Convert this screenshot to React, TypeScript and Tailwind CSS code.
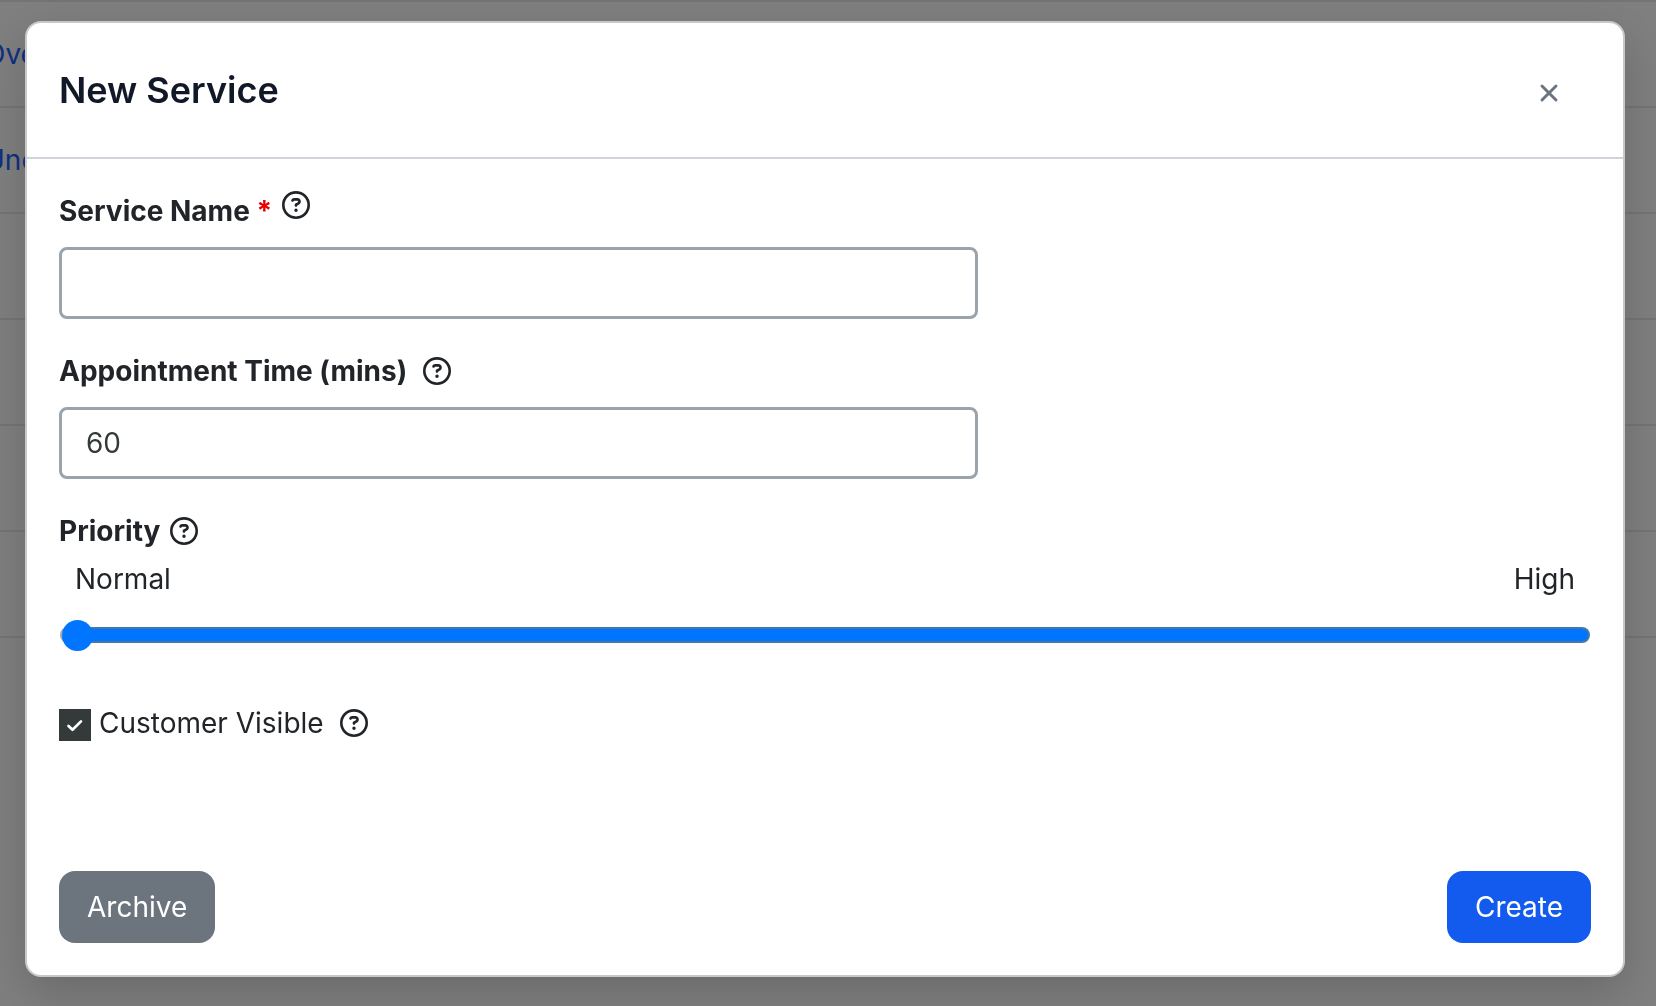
import type { ReactNode } from 'react';
import { X } from 'lucide-react';
import { FaRegCircleQuestion } from 'react-icons/fa6';

const services = ['Overview', 'Uncategorized', '', '', '', ''];

function HelpButton({ label, className = '' }: { label: string; className?: string }) {
  return (
    <button type="button" aria-label={label} className={`shrink-0 ${className}`}>
      <FaRegCircleQuestion className="size-7" />
    </button>
  );
}

function FieldLabel({ htmlFor, children }: { htmlFor: string; children: ReactNode }) {
  return (
    <label htmlFor={htmlFor} className="font-bold">
      {children}
    </label>
  );
}

const inputClass =
  'mt-4 block h-18 w-3/5 rounded-lg border-3 border-[#9aa4ad] bg-white px-6 text-[#343a3a] outline-none';

function ServiceTable() {
  return (
    <div className="overflow-hidden">
      <div className="-ml-4">
        <table className="w-full border-collapse">
          <tbody>
            {services.map((name, i) => (
              <tr key={i} className="h-[106px] border-t-2 border-[#e9e9e9] last:border-b-2">
                <td className="p-0 align-middle">
                  {name && (
                    <a href="#" className="text-[#1f62ff]">
                      {name}
                    </a>
                  )}
                </td>
              </tr>
            ))}
          </tbody>
        </table>
      </div>
    </div>
  );
}

export default function App() {
  return (
    <div className="min-h-screen bg-white font-['Inter',sans-serif] text-[28px] leading-10 text-[#212529]">
      <ServiceTable />
      <div className="fixed inset-0 flex overflow-auto bg-black/50 pt-[21px] pr-[31px] pb-[29px] pl-[25px]">
        <div
          role="dialog"
          aria-labelledby="dialog-title"
          className="flex flex-1 flex-col rounded-2xl border-2 border-[#c8c8c8] bg-white shadow-[0_16px_48px_rgba(0,0,0,0.18)]"
        >
          <header className="flex items-center justify-between border-b-2 border-[#ced4da] px-8 py-11">
            <h1 id="dialog-title" className="text-4xl leading-[46px] font-semibold text-[#111827]">
              New Service
            </h1>
            <button type="button" aria-label="Close" className="mr-4 px-3 pt-1.5 text-[#6b7280]">
              <X className="size-7" strokeWidth={2.5} />
            </button>
          </header>

          <form className="flex flex-1 flex-col p-8">
            <div className="flex items-start">
              <FieldLabel htmlFor="service-name">
                Service Name <span className="text-[#e60000]">*</span>
              </FieldLabel>
              <HelpButton label="About service name" className="ml-2.5 flex" />
            </div>
            <input id="service-name" type="text" className={inputClass} />

            <div className="mt-8 flex items-center">
              <FieldLabel htmlFor="appointment-time">Appointment Time (mins)</FieldLabel>
              <HelpButton label="About appointment time" className="ml-4" />
            </div>
            <input id="appointment-time" type="text" defaultValue="60" className={inputClass} />

            <div className="mt-8 flex items-center">
              <FieldLabel htmlFor="priority">Priority</FieldLabel>
              <HelpButton label="About priority" className="ml-2.5" />
            </div>
            <div className="mt-2 flex justify-between px-4">
              <span>Normal</span>
              <span>High</span>
            </div>
            <input
              id="priority"
              type="range"
              min="0"
              max="10"
              defaultValue="0"
              className="mt-5 block h-8 w-full appearance-none bg-transparent [&::-webkit-slider-runnable-track]:mx-px [&::-webkit-slider-runnable-track]:h-4 [&::-webkit-slider-runnable-track]:rounded-full [&::-webkit-slider-runnable-track]:border-2 [&::-webkit-slider-runnable-track]:border-[#767676]/60 [&::-webkit-slider-runnable-track]:bg-[linear-gradient(to_right,#efefef_16px,#0075ff_16px)] [&::-webkit-slider-runnable-track]:bg-origin-border [&::-webkit-slider-thumb]:-mt-[9px] [&::-webkit-slider-thumb]:size-[31px] [&::-webkit-slider-thumb]:appearance-none [&::-webkit-slider-thumb]:rounded-full [&::-webkit-slider-thumb]:bg-[#0075ff]"
            />

            <div className="mt-13 flex items-center">
              <span className="mt-1 grid size-8 shrink-0">
                <input
                  id="customer-visible"
                  type="checkbox"
                  defaultChecked
                  className="peer col-start-1 row-start-1 size-8 appearance-none border-2 border-[#343a3a] checked:bg-[#343a3a]"
                />
                <svg
                  viewBox="0 0 32 32"
                  fill="none"
                  stroke="white"
                  strokeWidth="2.7"
                  strokeLinecap="round"
                  strokeLinejoin="round"
                  className="pointer-events-none invisible col-start-1 row-start-1 size-8 peer-checked:visible"
                >
                  <path d="M9.5 17 13.5 20.8 22 12.4" />
                </svg>
              </span>
              <label htmlFor="customer-visible" className="ml-2">
                Customer Visible
              </label>
              <HelpButton label="About customer visibility" className="ml-4" />
            </div>

            <div className="mt-auto flex justify-between pt-8">
              <button type="button" className="h-18 rounded-2xl bg-[#6c757d] px-7 text-white">
                Archive
              </button>
              <button type="submit" className="h-18 rounded-2xl bg-[#125bee] px-7 text-white">
                Create
              </button>
            </div>
          </form>
        </div>
      </div>
    </div>
  );
}
